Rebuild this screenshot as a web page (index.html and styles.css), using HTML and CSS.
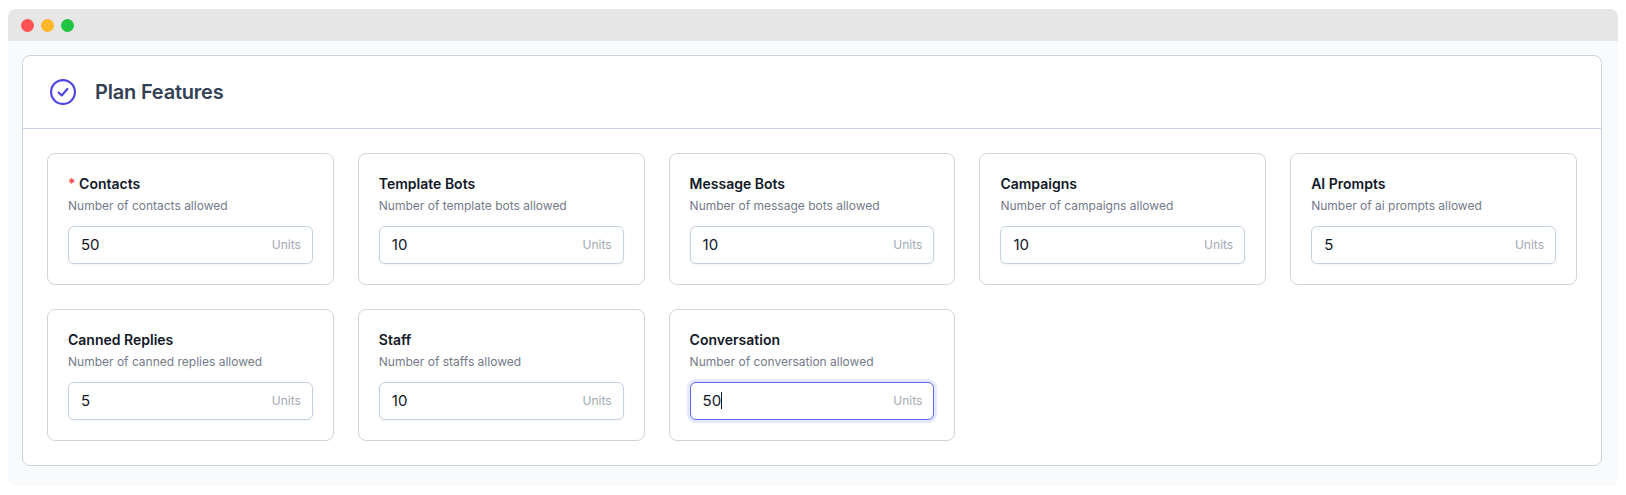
FILE: index.html
```html
<!DOCTYPE html>
<html lang="en">
<head>
<meta charset="utf-8">
<title>Plan Features</title>
<link rel="stylesheet" href="styles.css">
</head>
<body>
<div class="window">
  <div class="titlebar">
    <span class="dot dot-red"></span>
    <span class="dot dot-yellow"></span>
    <span class="dot dot-green"></span>
  </div>
  <div class="content">
    <section class="panel">
      <header class="panel-head">
        <svg class="head-icon" viewBox="0 0 24 24" fill="none" stroke="currentColor" stroke-linecap="round" stroke-linejoin="round" aria-hidden="true">
          <circle cx="12" cy="12" r="11" stroke-width="2"/>
          <path d="M8 12.4l2.8 2.8 5.2-6" stroke-width="2"/>
        </svg>
        <h2 class="panel-title">Plan Features</h2>
      </header>
      <div class="grid">
        <div class="card">
          <div class="label"><span class="req">*</span> Contacts</div>
          <div class="desc">Number of contacts allowed</div>
          <div class="field"><span class="value">50</span><span class="unit">Units</span></div>
        </div>
        <div class="card">
          <div class="label">Template Bots</div>
          <div class="desc">Number of template bots allowed</div>
          <div class="field"><span class="value">10</span><span class="unit">Units</span></div>
        </div>
        <div class="card">
          <div class="label">Message Bots</div>
          <div class="desc">Number of message bots allowed</div>
          <div class="field"><span class="value">10</span><span class="unit">Units</span></div>
        </div>
        <div class="card">
          <div class="label">Campaigns</div>
          <div class="desc">Number of campaigns allowed</div>
          <div class="field"><span class="value">10</span><span class="unit">Units</span></div>
        </div>
        <div class="card">
          <div class="label">AI Prompts</div>
          <div class="desc">Number of ai prompts allowed</div>
          <div class="field"><span class="value">5</span><span class="unit">Units</span></div>
        </div>
        <div class="card">
          <div class="label">Canned Replies</div>
          <div class="desc">Number of canned replies allowed</div>
          <div class="field"><span class="value">5</span><span class="unit">Units</span></div>
        </div>
        <div class="card">
          <div class="label">Staff</div>
          <div class="desc">Number of staffs allowed</div>
          <div class="field"><span class="value">10</span><span class="unit">Units</span></div>
        </div>
        <div class="card">
          <div class="label">Conversation</div>
          <div class="desc">Number of conversation allowed</div>
          <div class="field field-focus"><span class="value">50<span class="caret"></span></span><span class="unit">Units</span></div>
        </div>
      </div>
    </section>
  </div>
</div>
</body>
</html>
```
FILE: styles.css
```css
* { box-sizing: border-box; }
html, body { margin: 0; background: #fff; }
body {
  padding: 9px 8px;
  font-family: Inter, "Noto Sans", sans-serif;
  color: #111827;
}
.window {
  height: 477px;
  background: #f9fafb;
  border-radius: 8px;
  overflow: hidden;
}
.titlebar {
  height: 32px;
  background: #e6e6e6;
  display: flex;
  align-items: center;
  gap: 7px;
  padding: 1px 0 0 13px;
}
.dot { width: 13px; height: 13px; border-radius: 50%; }
.dot-red { background: #ff5252; }
.dot-yellow { background: #ffb629; }
.dot-green { background: #22c443; }
.content { padding: 14px 16px 0 14px; }
.panel {
  height: 411px;
  background: #fff;
  border: 1px solid #cbd5e1;
  border-radius: 8px;
}
.panel-head {
  height: 73px;
  display: flex;
  align-items: center;
  gap: 19px;
  padding: 0 27px;
  border-bottom: 1px solid #cbd5e1;
}
.head-icon { width: 26px; height: 26px; color: #4f46e5; flex: none; }
.panel-title {
  margin: 0;
  font-size: 20px;
  line-height: 28px;
  font-weight: 600;
  letter-spacing: -0.2px;
  color: #334155;
}
.grid {
  display: grid;
  grid-template-columns: repeat(5, 1fr);
  gap: 24px;
  padding: 24px;
}
.card {
  background: #fff;
  border: 1px solid #d1d5db;
  border-radius: 8px;
  padding: 20px;
}
.label {
  font-size: 14px;
  line-height: 20px;
  font-weight: 600;
  color: #111827;
}
.req { color: #ef4444; }
.desc {
  margin-top: 4px;
  font-size: 12px;
  line-height: 16px;
  color: #737b8a;
}
.field {
  margin-top: 12px;
  height: 38px;
  display: flex;
  align-items: center;
  justify-content: space-between;
  padding: 0 11px 0 12px;
  background: #fff;
  border: 1px solid #c5d0e0;
  border-radius: 6px;
  box-shadow: 0 1px 2px rgba(0, 0, 0, 0.05);
}
.field-focus {
  border-color: #6366f1;
  box-shadow: 0 0 0 3px #e4e9ff;
}
.value { font-size: 15px; line-height: 20px; color: #111827; }
.caret {
  display: inline-block;
  width: 1px;
  height: 17px;
  background: #111827;
  vertical-align: -3px;
}
.unit { font-size: 12px; line-height: 16px; color: #a3a9b5; }
```
